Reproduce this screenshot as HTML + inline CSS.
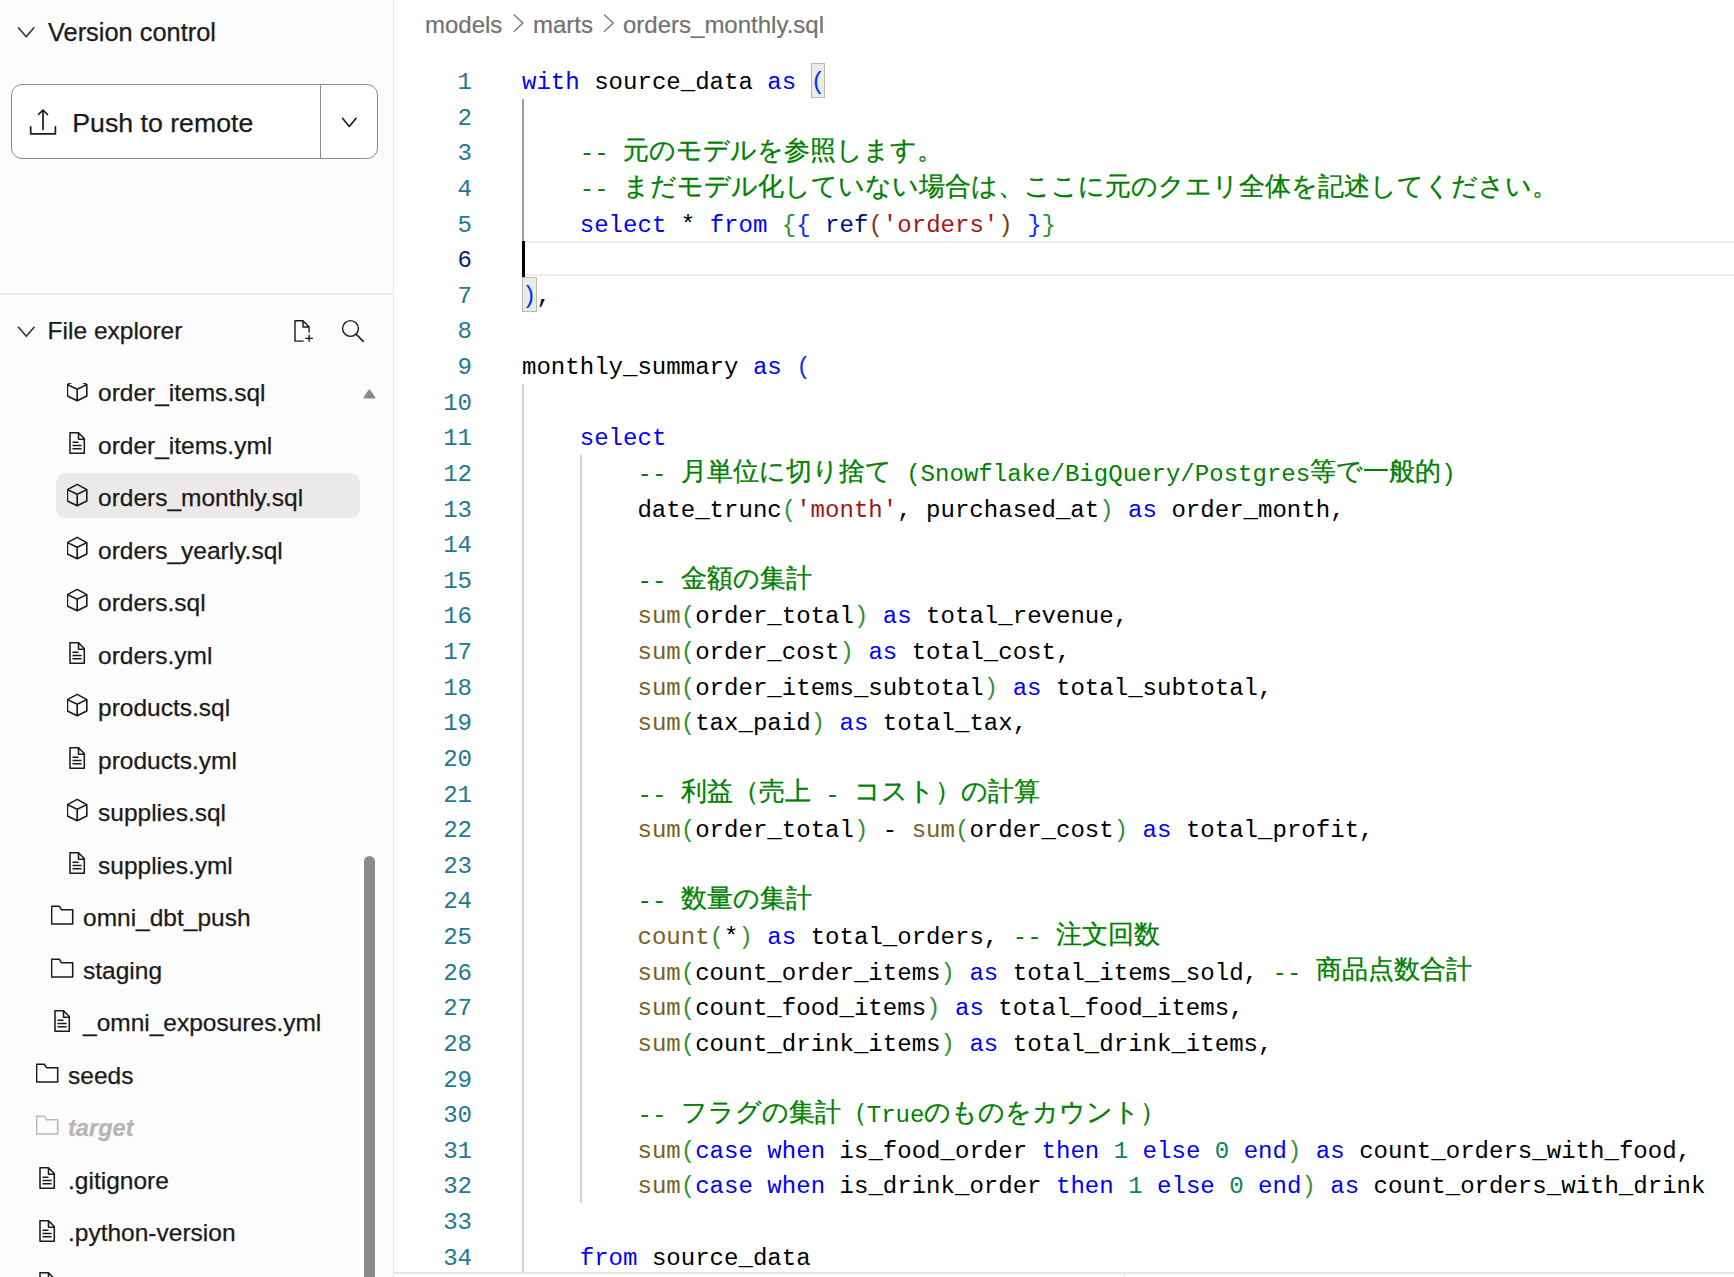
<!DOCTYPE html>
<html><head><meta charset="utf-8">
<style>
html,body{margin:0;padding:0;}
body{width:1734px;height:1277px;overflow:hidden;position:relative;background:#ffffff;font-family:"Liberation Sans",sans-serif;}
.abs{position:absolute;}
#side{position:absolute;left:0;top:0;width:393px;height:1277px;background:#fdfcfc;overflow:hidden;}
#sideborder{position:absolute;left:393px;top:0;width:1px;height:1277px;background:#ebe9ea;}
#sep{position:absolute;left:0;top:293px;width:393px;height:2px;background:#ebe9ea;}
.hdr{position:absolute;font-size:25px;color:#1b1a19;line-height:0;white-space:nowrap;-webkit-text-stroke:0.25px currentColor;}
#btn{position:absolute;left:11px;top:84px;width:364.5px;height:72.8px;border:1.4px solid #8d8989;border-radius:11px;background:#ffffff;}
#btndiv{position:absolute;left:320px;top:85px;width:1.3px;height:73px;background:#8d8989;}
#list{position:absolute;left:0;top:383px;width:393px;height:894px;overflow:hidden;}
#listin{position:absolute;left:0;top:-383px;width:393px;height:1400px;}
.fn{position:absolute;font-size:24.5px;color:#1b1a19;line-height:0;white-space:nowrap;-webkit-text-stroke:0.25px currentColor;}
.fn.gray{color:#b9b5b4;font-style:italic;font-weight:bold;font-size:23.6px;}
.ico{position:absolute;line-height:0;}
.ico svg{display:block;}
#selbg{position:absolute;left:56px;top:473px;width:304px;height:44.5px;border-radius:9px;background:#ebe9e9;}
#thumb{position:absolute;left:364px;top:856px;width:11px;height:480px;border-radius:5.5px;background:#8a8a8a;}
.bc{position:absolute;font-size:24px;color:#717171;line-height:0;white-space:nowrap;-webkit-text-stroke:0.2px currentColor;}
.l{position:absolute;left:522px;height:35.625px;line-height:35.625px;font-family:"Liberation Mono",monospace;font-size:24.05px;color:#000000;white-space:pre;}
.l .j{font-size:26.25px;-webkit-text-stroke:0.3px currentColor;position:relative;top:-1.2px;}
.ln{position:absolute;left:400px;width:72px;text-align:right;height:35.625px;line-height:35.625px;font-family:"Liberation Mono",monospace;font-size:24.05px;color:#237893;white-space:pre;}
.ln.act{color:#0b216f;}
.k{color:#0000ff}.c{color:#008000}.s{color:#a31515}.n{color:#098658}.f{color:#795e26}
.b1{color:#0431fa}.b2{color:#319331}.b3{color:#7b3814}.v{color:#001080}
.guide{position:absolute;width:2px;background:#d3d3d3;}
</style></head><body>
<div id="side">
  <svg class="abs" style="left:0;top:0" width="393" height="380" viewBox="0 0 393 380">
    <polyline points="18.5,27.8 26.2,36.8 33.9,27.8" fill="none" stroke="#3b3a39" stroke-width="1.7" stroke-linecap="round" stroke-linejoin="round"/>
    <polyline points="18.5,327.3 26.3,336.3 34.1,327.3" fill="none" stroke="#3b3a39" stroke-width="1.7" stroke-linecap="round" stroke-linejoin="round"/>
    <!-- new file -->
    <path d="M303.6,341.1 L295,341.1 L295,320.7 L303,320.7 L309.1,327 L309.1,332.5 M303,320.7 L303,327 L309.1,327 M305.4,338.4 L312.9,338.4 M309.1,334.8 L309.1,341.7" fill="none" stroke="#1b1a19" stroke-width="1.4" stroke-linejoin="round"/>
    <!-- search -->
    <circle cx="350.5" cy="328.5" r="7.9" fill="none" stroke="#1b1a19" stroke-width="1.4"/>
    <line x1="356.3" y1="334.4" x2="363.3" y2="341.4" stroke="#1b1a19" stroke-width="1.5" stroke-linecap="round"/>
  </svg>
  <div class="hdr" style="left:48px;top:31.5px;font-size:25.4px"><span>Version control</span></div>
  <div id="btn"></div>
  <div id="btndiv"></div>
  <svg class="abs" style="left:0;top:0" width="393" height="160" viewBox="0 0 393 160">
    <path d="M43,110 L43,129.3 M38.5,114.5 L43,110 L47.5,114.5 M30.7,126.8 L30.7,133.8 L55.4,133.8 L55.4,126.8" fill="none" stroke="#1b1a19" stroke-width="1.7" stroke-linecap="round" stroke-linejoin="round"/>
    <polyline points="342.5,118.3 349.3,126.5 356.1,118.3" fill="none" stroke="#1b1a19" stroke-width="1.6" stroke-linecap="round" stroke-linejoin="round"/>
  </svg>
  <div class="hdr" style="left:72.3px;top:123px;font-size:26.7px"><span>Push to remote</span></div>
  <div id="sep"></div>
  <div class="hdr" style="left:47.6px;top:331px;font-size:24.5px"><span>File explorer</span></div>
  <div id="list"><div id="listin">
    <div id="selbg"></div>
<div class="ico" style="left:66.80px;top:377.00px"><svg class="ic" width="24" height="26" viewBox="0 0 24 26"><path d="M10.2 2.4 L19.8 7.6 L19.8 19 L10.2 23.7 L0.4 19 L0.4 7.6 Z M0.4 7.6 L10.2 12.3 L19.8 7.6 M10.2 12.3 L10.2 23.7" fill="none" stroke="#1b1a19" stroke-width="1.6" stroke-linejoin="round"/></svg></div>
<div class="fn" style="left:98.00px;top:393.40px"><span>order_items.sql</span></div>
<div class="ico" style="left:69.00px;top:431.20px"><svg class="ic" width="20" height="26" viewBox="0 0 20 26"><path d="M1 1.7 L9.5 1.7 L15.3 7.5 L15.3 22.2 L1 22.2 Z M9.5 1.7 L9.5 8.2 L15.3 8.2 M3.5 11.2 L9.5 11.2 M3.5 14.5 L12.6 14.5 M3.5 17.8 L12.6 17.8" fill="none" stroke="#1b1a19" stroke-width="1.55" stroke-linejoin="round"/></svg></div>
<div class="fn" style="left:98.00px;top:445.90px"><span>order_items.yml</span></div>
<div class="ico" style="left:66.80px;top:482.00px"><svg class="ic" width="24" height="26" viewBox="0 0 24 26"><path d="M10.2 2.4 L19.8 7.6 L19.8 19 L10.2 23.7 L0.4 19 L0.4 7.6 Z M0.4 7.6 L10.2 12.3 L19.8 7.6 M10.2 12.3 L10.2 23.7" fill="none" stroke="#1b1a19" stroke-width="1.6" stroke-linejoin="round"/></svg></div>
<div class="fn" style="left:98.00px;top:498.40px"><span>orders_monthly.sql</span></div>
<div class="ico" style="left:66.80px;top:534.50px"><svg class="ic" width="24" height="26" viewBox="0 0 24 26"><path d="M10.2 2.4 L19.8 7.6 L19.8 19 L10.2 23.7 L0.4 19 L0.4 7.6 Z M0.4 7.6 L10.2 12.3 L19.8 7.6 M10.2 12.3 L10.2 23.7" fill="none" stroke="#1b1a19" stroke-width="1.6" stroke-linejoin="round"/></svg></div>
<div class="fn" style="left:98.00px;top:550.90px"><span>orders_yearly.sql</span></div>
<div class="ico" style="left:66.80px;top:587.00px"><svg class="ic" width="24" height="26" viewBox="0 0 24 26"><path d="M10.2 2.4 L19.8 7.6 L19.8 19 L10.2 23.7 L0.4 19 L0.4 7.6 Z M0.4 7.6 L10.2 12.3 L19.8 7.6 M10.2 12.3 L10.2 23.7" fill="none" stroke="#1b1a19" stroke-width="1.6" stroke-linejoin="round"/></svg></div>
<div class="fn" style="left:98.00px;top:603.40px"><span>orders.sql</span></div>
<div class="ico" style="left:69.00px;top:641.20px"><svg class="ic" width="20" height="26" viewBox="0 0 20 26"><path d="M1 1.7 L9.5 1.7 L15.3 7.5 L15.3 22.2 L1 22.2 Z M9.5 1.7 L9.5 8.2 L15.3 8.2 M3.5 11.2 L9.5 11.2 M3.5 14.5 L12.6 14.5 M3.5 17.8 L12.6 17.8" fill="none" stroke="#1b1a19" stroke-width="1.55" stroke-linejoin="round"/></svg></div>
<div class="fn" style="left:98.00px;top:655.90px"><span>orders.yml</span></div>
<div class="ico" style="left:66.80px;top:692.00px"><svg class="ic" width="24" height="26" viewBox="0 0 24 26"><path d="M10.2 2.4 L19.8 7.6 L19.8 19 L10.2 23.7 L0.4 19 L0.4 7.6 Z M0.4 7.6 L10.2 12.3 L19.8 7.6 M10.2 12.3 L10.2 23.7" fill="none" stroke="#1b1a19" stroke-width="1.6" stroke-linejoin="round"/></svg></div>
<div class="fn" style="left:98.00px;top:708.40px"><span>products.sql</span></div>
<div class="ico" style="left:69.00px;top:746.20px"><svg class="ic" width="20" height="26" viewBox="0 0 20 26"><path d="M1 1.7 L9.5 1.7 L15.3 7.5 L15.3 22.2 L1 22.2 Z M9.5 1.7 L9.5 8.2 L15.3 8.2 M3.5 11.2 L9.5 11.2 M3.5 14.5 L12.6 14.5 M3.5 17.8 L12.6 17.8" fill="none" stroke="#1b1a19" stroke-width="1.55" stroke-linejoin="round"/></svg></div>
<div class="fn" style="left:98.00px;top:760.90px"><span>products.yml</span></div>
<div class="ico" style="left:66.80px;top:797.00px"><svg class="ic" width="24" height="26" viewBox="0 0 24 26"><path d="M10.2 2.4 L19.8 7.6 L19.8 19 L10.2 23.7 L0.4 19 L0.4 7.6 Z M0.4 7.6 L10.2 12.3 L19.8 7.6 M10.2 12.3 L10.2 23.7" fill="none" stroke="#1b1a19" stroke-width="1.6" stroke-linejoin="round"/></svg></div>
<div class="fn" style="left:98.00px;top:813.40px"><span>supplies.sql</span></div>
<div class="ico" style="left:69.00px;top:851.20px"><svg class="ic" width="20" height="26" viewBox="0 0 20 26"><path d="M1 1.7 L9.5 1.7 L15.3 7.5 L15.3 22.2 L1 22.2 Z M9.5 1.7 L9.5 8.2 L15.3 8.2 M3.5 11.2 L9.5 11.2 M3.5 14.5 L12.6 14.5 M3.5 17.8 L12.6 17.8" fill="none" stroke="#1b1a19" stroke-width="1.55" stroke-linejoin="round"/></svg></div>
<div class="fn" style="left:98.00px;top:865.90px"><span>supplies.yml</span></div>
<div class="ico" style="left:51.20px;top:905.00px"><svg class="ic" width="26" height="24" viewBox="0 0 26 24"><path d="M0.6 1.2 L8.3 1.2 L10.4 4.7 L21.7 4.7 L21.7 19 L0.6 19 Z" fill="none" stroke="#1b1a19" stroke-width="1.55" stroke-linejoin="round"/></svg></div>
<div class="fn" style="left:83.00px;top:918.40px"><span>omni_dbt_push</span></div>
<div class="ico" style="left:51.20px;top:957.50px"><svg class="ic" width="26" height="24" viewBox="0 0 26 24"><path d="M0.6 1.2 L8.3 1.2 L10.4 4.7 L21.7 4.7 L21.7 19 L0.6 19 Z" fill="none" stroke="#1b1a19" stroke-width="1.55" stroke-linejoin="round"/></svg></div>
<div class="fn" style="left:83.00px;top:970.90px"><span>staging</span></div>
<div class="ico" style="left:54.00px;top:1008.70px"><svg class="ic" width="20" height="26" viewBox="0 0 20 26"><path d="M1 1.7 L9.5 1.7 L15.3 7.5 L15.3 22.2 L1 22.2 Z M9.5 1.7 L9.5 8.2 L15.3 8.2 M3.5 11.2 L9.5 11.2 M3.5 14.5 L12.6 14.5 M3.5 17.8 L12.6 17.8" fill="none" stroke="#1b1a19" stroke-width="1.55" stroke-linejoin="round"/></svg></div>
<div class="fn" style="left:83.00px;top:1023.40px"><span>_omni_exposures.yml</span></div>
<div class="ico" style="left:36.20px;top:1062.50px"><svg class="ic" width="26" height="24" viewBox="0 0 26 24"><path d="M0.6 1.2 L8.3 1.2 L10.4 4.7 L21.7 4.7 L21.7 19 L0.6 19 Z" fill="none" stroke="#1b1a19" stroke-width="1.55" stroke-linejoin="round"/></svg></div>
<div class="fn" style="left:68.00px;top:1075.90px"><span>seeds</span></div>
<div class="ico" style="left:36.20px;top:1115.00px"><svg class="ic" width="26" height="24" viewBox="0 0 26 24"><path d="M0.6 1.2 L8.3 1.2 L10.4 4.7 L21.7 4.7 L21.7 19 L0.6 19 Z" fill="none" stroke="#bab6b6" stroke-width="1.55" stroke-linejoin="round"/></svg></div>
<div class="fn gray" style="left:68.00px;top:1128.40px"><span>target</span></div>
<div class="ico" style="left:39.00px;top:1166.20px"><svg class="ic" width="20" height="26" viewBox="0 0 20 26"><path d="M1 1.7 L9.5 1.7 L15.3 7.5 L15.3 22.2 L1 22.2 Z M9.5 1.7 L9.5 8.2 L15.3 8.2 M3.5 11.2 L9.5 11.2 M3.5 14.5 L12.6 14.5 M3.5 17.8 L12.6 17.8" fill="none" stroke="#1b1a19" stroke-width="1.55" stroke-linejoin="round"/></svg></div>
<div class="fn" style="left:68.00px;top:1180.90px"><span>.gitignore</span></div>
<div class="ico" style="left:39.00px;top:1218.70px"><svg class="ic" width="20" height="26" viewBox="0 0 20 26"><path d="M1 1.7 L9.5 1.7 L15.3 7.5 L15.3 22.2 L1 22.2 Z M9.5 1.7 L9.5 8.2 L15.3 8.2 M3.5 11.2 L9.5 11.2 M3.5 14.5 L12.6 14.5 M3.5 17.8 L12.6 17.8" fill="none" stroke="#1b1a19" stroke-width="1.55" stroke-linejoin="round"/></svg></div>
<div class="fn" style="left:68.00px;top:1233.40px"><span>.python-version</span></div>
<div class="ico" style="left:39.00px;top:1271.20px"><svg class="ic" width="20" height="26" viewBox="0 0 20 26"><path d="M1 1.7 L9.5 1.7 L15.3 7.5 L15.3 22.2 L1 22.2 Z M9.5 1.7 L9.5 8.2 L15.3 8.2 M3.5 11.2 L9.5 11.2 M3.5 14.5 L12.6 14.5 M3.5 17.8 L12.6 17.8" fill="none" stroke="#1b1a19" stroke-width="1.55" stroke-linejoin="round"/></svg></div>
<div class="fn" style="left:68.00px;top:1285.90px"><span>.sqlfluff</span></div>
  </div></div>
  <svg class="abs" style="left:360px;top:384px" width="20" height="20" viewBox="360 384 20 20">
    <path d="M364.6,397.4 L369.4,390.6 L374.3,397.4 Z" fill="#8a8a8a" stroke="#8a8a8a" stroke-width="2" stroke-linejoin="round"/>
  </svg>
  <div id="thumb"></div>
</div>
<div id="sideborder"></div>
<div id="editor">
  <div class="bc" style="left:425px;top:24.8px"><span>models</span></div>
  <div class="bc" style="left:533px;top:24.8px"><span>marts</span></div>
  <div class="bc" style="left:623px;top:24.8px"><span>orders_monthly.sql</span></div>
  <svg class="abs" style="left:394px;top:0" width="300" height="50" viewBox="394 0 300 50">
    <polyline points="514.2,15 523,23.1 514.2,31.2" fill="none" stroke="#757575" stroke-width="1.35" stroke-linecap="round" stroke-linejoin="round"/>
    <polyline points="604.5,15 613.3,23.1 604.5,31.2" fill="none" stroke="#757575" stroke-width="1.35" stroke-linecap="round" stroke-linejoin="round"/>
  </svg>
  <!-- current line highlight -->
  <div class="abs" style="left:525px;top:241.2px;width:1209px;height:30.6px;border-top:2.6px solid #eeeeee;border-bottom:2.6px solid #eeeeee;"></div>
  <!-- indent guides -->
  <div class="guide" style="left:522px;top:98.6px;height:142.6px;background:#a0a0a0"></div>
  <div class="guide" style="left:522px;top:384px;height:890px;"></div>
  <div class="guide" style="left:580px;top:455px;height:748px;"></div>
  <!-- bracket match boxes -->
  <div class="abs" style="left:810.8px;top:63.4px;width:12.6px;height:32.6px;border:1.4px solid #b9b9b9;background:#e8eee6;"></div>
  <div class="abs" style="left:522.2px;top:277.1px;width:12.6px;height:32.6px;border:1.4px solid #b9b9b9;background:#e8eee6;"></div>
<div class="l" style="top:65.000px"><span class="k">with</span> source_data <span class="k">as</span> <span class="b1">(</span></div>
<div class="ln" style="top:65.000px">1</div>
<div class="l" style="top:100.625px"></div>
<div class="ln" style="top:100.625px">2</div>
<div class="l" style="top:136.250px">    <span class="c">-- <span class="j">元のモデルを参照します。</span></span></div>
<div class="ln" style="top:136.250px">3</div>
<div class="l" style="top:171.875px">    <span class="c">-- <span class="j">まだモデル化していない場合は、ここに元のクエリ全体を記述してください。</span></span></div>
<div class="ln" style="top:171.875px">4</div>
<div class="l" style="top:207.500px">    <span class="k">select</span> * <span class="k">from</span> <span class="b2">{</span><span class="b1">{</span> <span class="v">ref</span><span class="b3">(</span><span class="s">&#x27;orders&#x27;</span><span class="b3">)</span> <span class="b1">}</span><span class="b2">}</span></div>
<div class="ln" style="top:207.500px">5</div>
<div class="l" style="top:243.125px"></div>
<div class="ln act" style="top:243.125px">6</div>
<div class="l" style="top:278.750px"><span class="b1">)</span>,</div>
<div class="ln" style="top:278.750px">7</div>
<div class="l" style="top:314.375px"></div>
<div class="ln" style="top:314.375px">8</div>
<div class="l" style="top:350.000px">monthly_summary <span class="k">as</span> <span class="b1">(</span></div>
<div class="ln" style="top:350.000px">9</div>
<div class="l" style="top:385.625px"></div>
<div class="ln" style="top:385.625px">10</div>
<div class="l" style="top:421.250px">    <span class="k">select</span></div>
<div class="ln" style="top:421.250px">11</div>
<div class="l" style="top:456.875px">        <span class="c">-- <span class="j">月単位に切り捨て</span> (Snowflake/BigQuery/Postgres<span class="j">等で一般的</span>)</span></div>
<div class="ln" style="top:456.875px">12</div>
<div class="l" style="top:492.500px">        date_trunc<span class="b2">(</span><span class="s">&#x27;month&#x27;</span>, purchased_at<span class="b2">)</span> <span class="k">as</span> order_month,</div>
<div class="ln" style="top:492.500px">13</div>
<div class="l" style="top:528.125px"></div>
<div class="ln" style="top:528.125px">14</div>
<div class="l" style="top:563.750px">        <span class="c">-- <span class="j">金額の集計</span></span></div>
<div class="ln" style="top:563.750px">15</div>
<div class="l" style="top:599.375px">        <span class="f">sum</span><span class="b2">(</span>order_total<span class="b2">)</span> <span class="k">as</span> total_revenue,</div>
<div class="ln" style="top:599.375px">16</div>
<div class="l" style="top:635.000px">        <span class="f">sum</span><span class="b2">(</span>order_cost<span class="b2">)</span> <span class="k">as</span> total_cost,</div>
<div class="ln" style="top:635.000px">17</div>
<div class="l" style="top:670.625px">        <span class="f">sum</span><span class="b2">(</span>order_items_subtotal<span class="b2">)</span> <span class="k">as</span> total_subtotal,</div>
<div class="ln" style="top:670.625px">18</div>
<div class="l" style="top:706.250px">        <span class="f">sum</span><span class="b2">(</span>tax_paid<span class="b2">)</span> <span class="k">as</span> total_tax,</div>
<div class="ln" style="top:706.250px">19</div>
<div class="l" style="top:741.875px"></div>
<div class="ln" style="top:741.875px">20</div>
<div class="l" style="top:777.500px">        <span class="c">-- <span class="j">利益（売上</span> - <span class="j">コスト）の計算</span></span></div>
<div class="ln" style="top:777.500px">21</div>
<div class="l" style="top:813.125px">        <span class="f">sum</span><span class="b2">(</span>order_total<span class="b2">)</span> - <span class="f">sum</span><span class="b2">(</span>order_cost<span class="b2">)</span> <span class="k">as</span> total_profit,</div>
<div class="ln" style="top:813.125px">22</div>
<div class="l" style="top:848.750px"></div>
<div class="ln" style="top:848.750px">23</div>
<div class="l" style="top:884.375px">        <span class="c">-- <span class="j">数量の集計</span></span></div>
<div class="ln" style="top:884.375px">24</div>
<div class="l" style="top:920.000px">        <span class="f">count</span><span class="b2">(</span>*<span class="b2">)</span> <span class="k">as</span> total_orders, <span class="c">-- <span class="j">注文回数</span></span></div>
<div class="ln" style="top:920.000px">25</div>
<div class="l" style="top:955.625px">        <span class="f">sum</span><span class="b2">(</span>count_order_items<span class="b2">)</span> <span class="k">as</span> total_items_sold, <span class="c">-- <span class="j">商品点数合計</span></span></div>
<div class="ln" style="top:955.625px">26</div>
<div class="l" style="top:991.250px">        <span class="f">sum</span><span class="b2">(</span>count_food_items<span class="b2">)</span> <span class="k">as</span> total_food_items,</div>
<div class="ln" style="top:991.250px">27</div>
<div class="l" style="top:1026.875px">        <span class="f">sum</span><span class="b2">(</span>count_drink_items<span class="b2">)</span> <span class="k">as</span> total_drink_items,</div>
<div class="ln" style="top:1026.875px">28</div>
<div class="l" style="top:1062.500px"></div>
<div class="ln" style="top:1062.500px">29</div>
<div class="l" style="top:1098.125px">        <span class="c">-- <span class="j">フラグの集計（</span>True<span class="j">のものをカウント）</span></span></div>
<div class="ln" style="top:1098.125px">30</div>
<div class="l" style="top:1133.750px">        <span class="f">sum</span><span class="b2">(</span><span class="k">case</span> <span class="k">when</span> is_food_order <span class="k">then</span> <span class="n">1</span> <span class="k">else</span> <span class="n">0</span> <span class="k">end</span><span class="b2">)</span> <span class="k">as</span> count_orders_with_food,</div>
<div class="ln" style="top:1133.750px">31</div>
<div class="l" style="top:1169.375px">        <span class="f">sum</span><span class="b2">(</span><span class="k">case</span> <span class="k">when</span> is_drink_order <span class="k">then</span> <span class="n">1</span> <span class="k">else</span> <span class="n">0</span> <span class="k">end</span><span class="b2">)</span> <span class="k">as</span> count_orders_with_drink</div>
<div class="ln" style="top:1169.375px">32</div>
<div class="l" style="top:1205.000px"></div>
<div class="ln" style="top:1205.000px">33</div>
<div class="l" style="top:1240.625px">    <span class="k">from</span> source_data</div>
<div class="ln" style="top:1240.625px">34</div>
  <!-- cursor -->
  <div class="abs" style="left:522px;top:241px;width:3px;height:35.8px;background:#000"></div>
  <!-- bottom line -->
  <div class="abs" style="left:394px;top:1272px;width:1340px;height:2px;background:#e7e5e5"></div>
  <div class="abs" style="left:1123.5px;top:1274px;width:1.5px;height:3px;background:#e5e5e5"></div>
</div>
</body></html>
